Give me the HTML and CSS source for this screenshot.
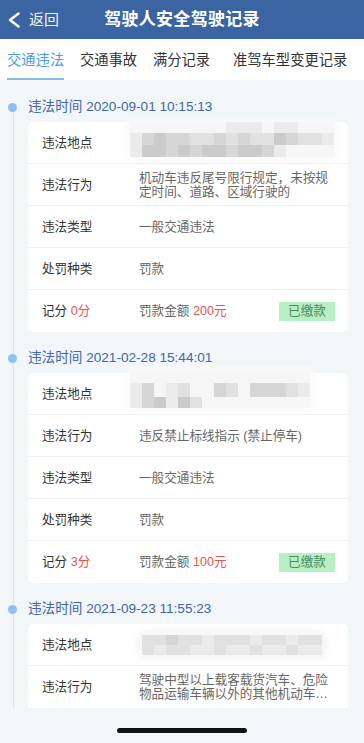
FILE: index.html
```html
<!DOCTYPE html>
<html lang="zh-CN">
<head>
<meta charset="utf-8">
<title>驾驶人安全驾驶记录</title>
<link rel="stylesheet" href="styles.css">
</head>
<body>
<header class="header">
  <div class="back">
    <svg class="chev" width="12" height="16" viewBox="0 0 12 16"><polyline points="10.5,1.5 2,8 10.5,14.5" fill="none" stroke="#fff" stroke-width="2.4" stroke-linecap="round" stroke-linejoin="round"/></svg>
    <span>返回</span>
  </div>
  <div class="title">驾驶人安全驾驶记录</div>
  <div></div>
</header>
<nav class="tabs">
  <div class="tab active"><span>交通违法</span></div>
  <div class="tab"><span>交通事故</span></div>
  <div class="tab"><span>满分记录</span></div>
  <div class="tab last"><span>准驾车型变更记录</span></div>
</nav>
<main class="list">
  <section class="item">
    <div class="time">违法时间 2020-09-01 10:15:13</div>
    <div class="card">
      <div class="row">
        <div class="label">违法地点</div>
        <div class="mosaic m1">
          <div class="mr h11"><i class="s0"></i><i class="s0"></i><i class="s0"></i><i class="s0"></i><i class="s0"></i><i class="s0"></i><i class="s0"></i><i class="s0"></i><i class="s1"></i><i class="s1"></i><i class="s1"></i><i class="s0"></i><i class="s1"></i><i class="s1"></i><i class="s0"></i><i class="s0"></i><i class="s0"></i></div>
          <div class="mr h12"><i class="s1"></i><i class="s3"></i><i class="s4"></i><i class="s3"></i><i class="s3"></i><i class="s2"></i><i class="s2"></i><i class="s3"></i><i class="s2"></i><i class="s3"></i><i class="s2"></i><i class="s2"></i><i class="s4"></i><i class="s3"></i><i class="s2"></i><i class="s2"></i><i class="s1"></i></div>
          <div class="mr h12"><i class="s1"></i><i class="s4"></i><i class="s4"></i><i class="s3"></i><i class="s4"></i><i class="s3"></i><i class="s4"></i><i class="s4"></i><i class="s3"></i><i class="s4"></i><i class="s4"></i><i class="s3"></i><i class="s1"></i></div>
        </div>
      </div>
      <div class="row">
        <div class="label">违法行为</div>
        <div class="value">机动车违反尾号限行规定，未按规定时间、道路、区域行驶的</div>
      </div>
      <div class="row">
        <div class="label">违法类型</div>
        <div class="value">一般交通违法</div>
      </div>
      <div class="row">
        <div class="label">处罚种类</div>
        <div class="value">罚款</div>
      </div>
      <div class="row">
        <div class="label">记分 <em class="red">0分</em></div>
        <div class="value">罚款金额 <em class="red">200元</em></div>
        <div class="badge">已缴款</div>
      </div>
    </div>
  </section>

  <section class="item">
    <div class="time">违法时间 2021-02-28 15:44:01</div>
    <div class="card">
      <div class="row">
        <div class="label">违法地点</div>
        <div class="mosaic m2">
          <div class="mr h11"><i class="s0"></i><i class="s0"></i><i class="s0"></i><i class="s0"></i><i class="s0"></i><i class="s0"></i><i class="s0"></i><i class="s0"></i><i class="s0"></i><i class="s0"></i><i class="s0"></i><i class="s0"></i><i class="s0"></i><i class="s0"></i><i class="s0"></i></div>
          <div class="mr h14"><i class="s1"></i><i class="s3"></i><i class="s0"></i><i class="s1"></i><i class="s2"></i><i class="s0"></i><i class="s0"></i><i class="s3"></i><i class="s2"></i><i class="s0"></i><i class="s3"></i><i class="s3"></i><i class="s3"></i><i class="s2"></i><i class="s1"></i></div>
          <div class="mr h11"><i class="s1"></i><i class="s3"></i><i class="s4"></i><i class="s1"></i><i class="s4"></i><i class="s2"></i><i class="s0"></i><i class="s0"></i></div>
        </div>
      </div>
      <div class="row">
        <div class="label">违法行为</div>
        <div class="value">违反禁止标线指示 (禁止停车)</div>
      </div>
      <div class="row">
        <div class="label">违法类型</div>
        <div class="value">一般交通违法</div>
      </div>
      <div class="row">
        <div class="label">处罚种类</div>
        <div class="value">罚款</div>
      </div>
      <div class="row">
        <div class="label">记分 <em class="red">3分</em></div>
        <div class="value">罚款金额 <em class="red">100元</em></div>
        <div class="badge">已缴款</div>
      </div>
    </div>
  </section>

  <section class="item">
    <div class="time">违法时间 2021-09-23 11:55:23</div>
    <div class="card cut">
      <div class="row">
        <div class="label">违法地点</div>
        <div class="mosaic m3">
          <div class="mr h10"><i class="s2"></i><i class="s2"></i><i class="s3"></i><i class="s2"></i><i class="s2"></i><i class="s1"></i><i class="s2"></i><i class="s2"></i><i class="s2"></i><i class="s1"></i><i class="s2"></i><i class="s2"></i><i class="s1"></i><i class="s2"></i><i class="s2"></i></div>
          <div class="mr h10"><i class="s2"></i><i class="s1"></i><i class="s2"></i><i class="s2"></i><i class="s1"></i><i class="s1"></i><i class="s2"></i><i class="s1"></i><i class="s1"></i><i class="s2"></i><i class="s1"></i><i class="s1"></i><i class="s2"></i><i class="s1"></i><i class="s1"></i></div>
        </div>
      </div>
      <div class="row">
        <div class="label">违法行为</div>
        <div class="value clamp">驾驶中型以上载客载货汽车、危险物品运输车辆以外的其他机动车…</div>
      </div>
    </div>
  </section>
</main>
<footer class="bottom"><div class="indicator"></div></footer>
</body>
</html>
```

FILE: styles.css
```css
* { box-sizing: border-box; }
html, body { margin: 0; padding: 0; }
body {
  width: 364px;
  height: 743px;
  overflow: hidden;
  background: #f2f6f8;
  font-family: "Liberation Sans", "Noto Sans CJK SC", sans-serif;
  color: #333;
}
em { font-style: normal; }

.header {
  height: 39px;
  background: #3b64a3;
  display: grid;
  grid-template-columns: 1fr auto 1fr;
  align-items: center;
  color: #fff;
}
.back {
  display: flex;
  align-items: center;
  padding-left: 8px;
  gap: 9px;
  font-size: 15px;
  line-height: 20px;
  color: #eef3fa;
}
.chev { display: block; }
.title {
  font-size: 17px;
  line-height: 22px;
  font-weight: 600;
  letter-spacing: 0.3px;
}

.tabs {
  height: 41px;
  background: #fff;
  display: flex;
  padding-left: 7px;
  gap: 15.8px;
}
.tab {
  display: flex;
  align-items: center;
  font-size: 14.3px;
  line-height: 20px;
  color: #333;
  border-bottom: 2px solid transparent;
  padding-top: 2px;
}
.tab.active {
  color: #4d9be4;
  border-bottom-color: #86bdf0;
}
.tab.last { margin-left: 7px; }

.list {
  position: relative;
  height: 628px;
  overflow: hidden;
  padding: 1px 16px 0 28px;
}
.list::before {
  content: "";
  position: absolute;
  left: 13px;
  top: 27px;
  bottom: 0;
  width: 1px;
  background: #d8e7f5;
}
.item { padding-top: 16px; }
.time {
  position: relative;
  font-size: 13.6px;
  line-height: 20px;
  color: #3d68aa;
}
.time::before {
  content: "";
  position: absolute;
  left: -20px;
  top: 5.5px;
  width: 9px;
  height: 9px;
  border-radius: 50%;
  background: #8dc1f1;
}
.card {
  margin-top: 5px;
  background: #fff;
  border-radius: 5px;
}
.card.cut { border-radius: 5px 5px 0 0; }
.row {
  display: flex;
  align-items: center;
  height: 42px;
  padding: 0 13px 0 14px;
  border-bottom: 1px solid #eef0f2;
  font-size: 12.6px;
}
.row:last-child { border-bottom: none; }
.label {
  width: 97px;
  flex: none;
  color: #333;
  line-height: 16px;
}
.value {
  flex: 1;
  color: #666;
  line-height: 14px;
}
.clamp {
  display: -webkit-box;
  -webkit-box-orient: vertical;
  -webkit-line-clamp: 2;
  overflow: hidden;
}
.red { color: #e5554f; }
.badge {
  flex: none;
  width: 56px;
  height: 19px;
  line-height: 19px;
  text-align: center;
  background: #b9f0c3;
  color: #4b8a5e;
  font-size: 12.6px;
}

.mosaic {
  align-self: flex-start;
  display: flex;
  flex-direction: column;
  filter: blur(0.5px);
  box-shadow: 0 0 6px 4px rgba(250, 250, 250, 0.9);
  background: #f7f7f7;
}
.m1 { margin-left: -9px; }
.m2 { margin-left: -9px; margin-top: -1px; }
.m3 {
  margin-left: 3px;
  align-self: center;
  box-shadow: 0 0 4px 6px rgba(247, 247, 247, 0.95);
  border-radius: 8px;
}
.mr { display: flex; }
.mr i { display: block; width: 12px; }
.h10 i { height: 10px; }
.h11 i { height: 11px; }
.h12 i { height: 12px; }
.h14 i { height: 14px; }
.s0 { background: #f6f6f6; }
.s1 { background: #ebebeb; }
.s2 { background: #e1e1e1; }
.s3 { background: #d6d6d6; }
.s4 { background: #cbcbcb; }

.bottom {
  height: 35px;
  display: flex;
  justify-content: center;
  padding-top: 20px;
}
.indicator {
  width: 130px;
  height: 5px;
  border-radius: 3px;
  background: #111;
}
```
